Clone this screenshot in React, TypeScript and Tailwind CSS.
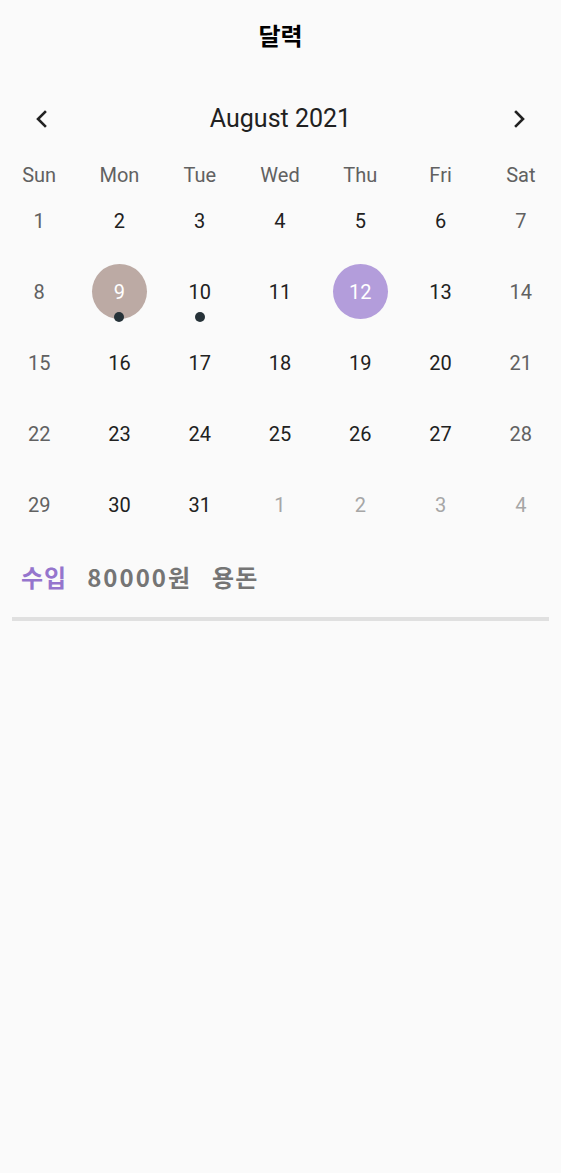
// 달력 화면 — month calendar with income summary

const WEEKDAYS = ["Sun", "Mon", "Tue", "Wed", "Thu", "Fri", "Sat"];

type Day = { n: number; outside?: boolean; marker?: "picked" | "today"; dot?: boolean };

const buildWeeks = (): Day[][] => {
  const days: Day[] = [];
  for (let i = 1; i <= 31; i++) days.push({ n: i });
  for (let i = 1; i <= 4; i++) days.push({ n: i, outside: true });
  days[8].marker = "picked";
  days[8].dot = true;
  days[9].dot = true;
  days[11].marker = "today";
  const weeks: Day[][] = [];
  for (let i = 0; i < days.length; i += 7) weeks.push(days.slice(i, i + 7));
  return weeks;
};

const WEEKS = buildWeeks();

function Chevron({ dir }: { dir: "left" | "right" }) {
  return (
    <svg width="24" height="24" viewBox="0 0 24 24" fill="none">
      <path
        d={dir === "left" ? "M15 5l-7 7 7 7" : "M9 5l7 7-7 7"}
        stroke="#212121"
        strokeWidth="2.6"
        strokeLinecap="square"
      />
    </svg>
  );
}

function DayCell({ day, col }: { day: Day; col: number }) {
  const weekend = col === 0 || col === 6;
  let color = "text-[#212121]";
  if (day.outside) color = "text-[#a6a6a6]";
  else if (weekend) color = "text-[#616161]";

  return (
    <div className="relative flex items-center justify-center h-[71px]">
      {day.marker && (
        <div
          className={
            "absolute w-[55px] h-[55px] rounded-full " +
            (day.marker === "picked" ? "bg-[#bcaaa4]" : "bg-[#b39ddb]")
          }
        />
      )}
      <span className={"relative text-[20px] " + (day.marker ? "text-white" : color)}>{day.n}</span>
      {day.dot && (
        <div className="absolute left-1/2 top-[61px] -translate-x-1/2 -translate-y-1/2 w-[10px] h-[10px] rounded-full bg-[#263238]" />
      )}
    </div>
  );
}

export default function App() {
  return (
    <div className="min-h-[1173px] bg-[#fafafa] font-['Roboto','Noto_Sans_CJK_KR',sans-serif]">
      <header className="h-[70px] flex items-center justify-center">
        <h1 className="text-[24px] font-bold text-black font-['Noto_Sans_CJK_KR',sans-serif]">달력</h1>
      </header>

      <div className="mt-[24px] h-[50px] flex items-center justify-between px-[30px]">
        <Chevron dir="left" />
        <span className="text-[25px] text-[#212121]">August 2021</span>
        <Chevron dir="right" />
      </div>

      <div className="-ml-[1px] mt-[21px] grid grid-cols-7 h-[20px] items-center">
        {WEEKDAYS.map((d) => (
          <div key={d} className="text-center text-[20px] leading-none text-[#616161]">
            {d}
          </div>
        ))}
      </div>

      {WEEKS.map((week, w) => (
        <div key={w} className="-ml-[1px] grid grid-cols-7">
          {week.map((day, c) => (
            <DayCell key={c} day={day} col={c} />
          ))}
        </div>
      ))}

      <div className="mt-[16px] flex items-center gap-[20px] px-[21px] h-[42px] font-['Noto_Sans_CJK_KR',sans-serif] font-bold text-[24px] tracking-[1px]">
        <span className="text-[#9575cd]">수입</span>
        <span className="text-[#757575] tracking-[2px]">80000원</span>
        <span className="text-[#757575]">용돈</span>
      </div>

      <div className="mt-[19px] mx-[12px] h-[4px] bg-[#e0e0e0]" />
    </div>
  );
}
